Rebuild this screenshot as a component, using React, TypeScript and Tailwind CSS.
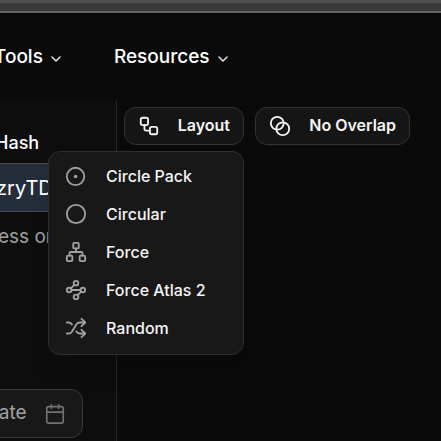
import React from "react";
import {
  Blend,
  Calendar,
  ChevronDown,
  Circle,
  Network,
  Shuffle,
  Waypoints,
  Workflow,
} from "lucide-react";

function CirclePackIcon() {
  return (
    <svg width="22" height="22" viewBox="0 0 24 24" fill="none" stroke="currentColor" strokeWidth="2" aria-hidden="true">
      <circle cx="11.5" cy="12.5" r="9.5" />
      <circle cx="11.5" cy="12.5" r="1.9" fill="currentColor" stroke="none" />
    </svg>
  );
}

const layouts = [
  { name: "Circle Pack", icon: <CirclePackIcon /> },
  { name: "Circular", icon: <Circle size={22} strokeWidth={2} /> },
  { name: "Force", icon: <Network size={22} strokeWidth={2} /> },
  { name: "Force Atlas 2", icon: <Waypoints size={22} strokeWidth={2} /> },
  { name: "Random", icon: <Shuffle size={22} strokeWidth={2} /> },
];

function NavButton({ label }: { label: string }) {
  return (
    <button type="button" className="flex items-center gap-[5px] text-[19px] leading-7 font-medium text-white">
      {label}
      <ChevronDown size={16} strokeWidth={2.25} className="mt-1 text-neutral-200" />
    </button>
  );
}

function LayoutMenu() {
  return (
    <div role="menu" className="absolute top-full right-0 z-10 mt-1.5 w-49 rounded-xl border border-[#2e2e2e] bg-[#181818] pt-[5px] pb-[7px] shadow-xl">
      {layouts.map(({ name, icon }) => (
        <button key={name} type="button" role="menuitem" className="flex h-[38px] w-full items-center gap-[19px] px-4 text-base font-medium text-neutral-100">
          <span className="text-neutral-400">{icon}</span>
          {name}
        </button>
      ))}
    </div>
  );
}

function Sidebar() {
  return (
    <aside className="w-[117px] shrink-0 overflow-hidden border-r border-[#262626] bg-[#0d0d0d] pt-[29px]">
      <label htmlFor="hash" className="-ml-[5px] block text-lg leading-7 font-medium text-white">
        Hash
      </label>
      <input
        id="hash"
        defaultValue="zryTD"
        className="mt-1.5 -ml-1 block h-[49px] w-[121px] border-y border-[#454a55] bg-[#252d3b] text-xl text-white outline-none"
      />
      <p className="-ml-0.5 mt-[11px] text-[19px] leading-7 whitespace-nowrap text-neutral-400">ess or</p>
      <button type="button" className="mt-[138px] -ml-5 flex h-[49px] w-[103px] items-center justify-between rounded-xl border border-[#3a3a3a] bg-[#181818] pr-4 pl-1 text-[19px] text-neutral-400">
        Date
        <Calendar size={22} strokeWidth={1.75} className="text-neutral-500" />
      </button>
    </aside>
  );
}

export default function App() {
  return (
    <div className="flex h-screen flex-col overflow-hidden bg-[#0a0a0a] font-['Inter',sans-serif]">
      <div className="h-[13px] shrink-0 border-t-[3px] border-b-2 border-t-[#505050] border-b-[#626262] bg-[#3a3a3a]" />
      <header className="flex h-[87px] shrink-0 items-center gap-[50px]">
        <div className="-ml-1.5">
          <NavButton label="Tools" />
        </div>
        <NavButton label="Resources" />
      </header>
      <div className="flex grow">
        <Sidebar />
        <main className="flex grow items-start gap-[11px] pt-[7px] pl-[7px]">
          <div className="relative">
            <button type="button" aria-haspopup="menu" aria-expanded="true" className="flex h-[38px] w-30 items-center justify-between rounded-xl border border-[#333333] bg-[#151515] px-[13px] pb-0.5 text-base font-semibold text-neutral-100">
              <Workflow size={22} className="mt-0.5" />
              Layout
            </button>
            <LayoutMenu />
          </div>
          <button type="button" className="flex h-[38px] w-[155px] items-center justify-between rounded-xl border border-[#333333] bg-[#151515] px-[13px] pb-0.5 text-base font-semibold text-neutral-100">
            <Blend size={22} className="mt-0.5" />
            No Overlap
          </button>
        </main>
      </div>
    </div>
  );
}
